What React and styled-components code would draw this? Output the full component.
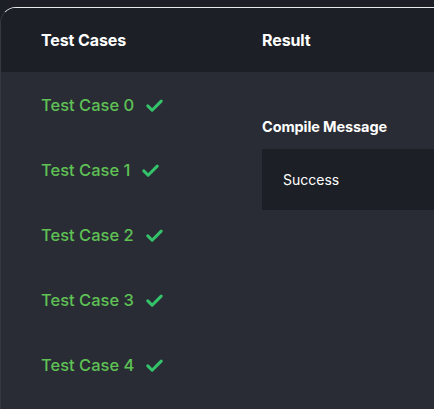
import React from 'react';
import styled, { createGlobalStyle } from 'styled-components';

const GlobalStyle = createGlobalStyle`
    html, body {
        margin: 0;
        padding: 0;
        background: #1d1f27;
        overflow: hidden;
    }
    body {
        font-family: Inter, "Noto Sans", sans-serif;
    }
`

const Page = styled.div`
    width: 434px;
    height: 409px;
    padding-top: 7px;
    box-sizing: border-box;
    background: #1d1f27;
`

const Panel = styled.div`
    box-sizing: border-box;
    height: 402px;
    margin-right: -20px;
    border-top: 1px solid #e8e8ea;
    border-left: 1px solid rgba(255, 255, 255, 0.06);
    border-top-left-radius: 16px;
    overflow: hidden;
    display: flex;
    flex-direction: column;
    background: #292c34;
`

const Header = styled.div`
    display: grid;
    grid-template-columns: 261px 1fr;
    height: 64px;
    align-items: center;
    background: #1d1f27;
`

const HeaderCell = styled.div`
    color: #ffffff;
    font-weight: 700;
    font-size: 16px;
    letter-spacing: -0.1px;
    padding-left: ${p => p.$pad}px;
`

const Body = styled.div`
    flex: 1;
    display: grid;
    grid-template-columns: 261px 1fr;
`

const CaseList = styled.ul`
    list-style: none;
    margin: 0;
    padding: 21px 0 0 40px;
    display: flex;
    flex-direction: column;
    gap: 41px;
`

const CaseItem = styled.li`
    display: flex;
    align-items: center;
    gap: 11px;
    height: 24px;
    color: #5fc154;
    font-size: 16.5px;
    font-weight: 500;
`

const Check = styled.svg`
    width: 19px;
    height: 19px;
    flex-shrink: 0;
`

const ResultPane = styled.div`
    padding-top: 45px;
`

const Title = styled.h3`
    margin: 0 0 12px 0;
    color: #ffffff;
    font-size: 14.5px;
    font-weight: 700;
    letter-spacing: -0.1px;
    line-height: 20px;
`

const MessageBox = styled.div`
    height: 61px;
    display: flex;
    align-items: center;
    padding-left: 21px;
    background: #1d1f27;
    color: #ffffff;
    font-size: 14px;
    font-weight: 400;
`

const CheckIcon = () => (
    <Check viewBox="0 0 24 24">
        <path d="M3.5 12.5 L9 18 L20.5 6.5" fill="none" stroke="#34c36a" strokeWidth="3.8" strokeLinecap="round" strokeLinejoin="round" />
    </Check>
)

const cases = [0, 1, 2, 3, 4];

const App = () => {
    return (
        <Page>
            <GlobalStyle />
            <Panel>
                <Header>
                    <HeaderCell $pad={40}>Test Cases</HeaderCell>
                    <HeaderCell $pad={0}>Result</HeaderCell>
                </Header>
                <Body>
                    <CaseList>
                        {cases.map(n => (
                            <CaseItem key={n}>
                                Test Case {n}
                                <CheckIcon />
                            </CaseItem>
                        ))}
                    </CaseList>
                    <ResultPane>
                        <Title>Compile Message</Title>
                        <MessageBox>Success</MessageBox>
                    </ResultPane>
                </Body>
            </Panel>
        </Page>
    );
}

export default App;
